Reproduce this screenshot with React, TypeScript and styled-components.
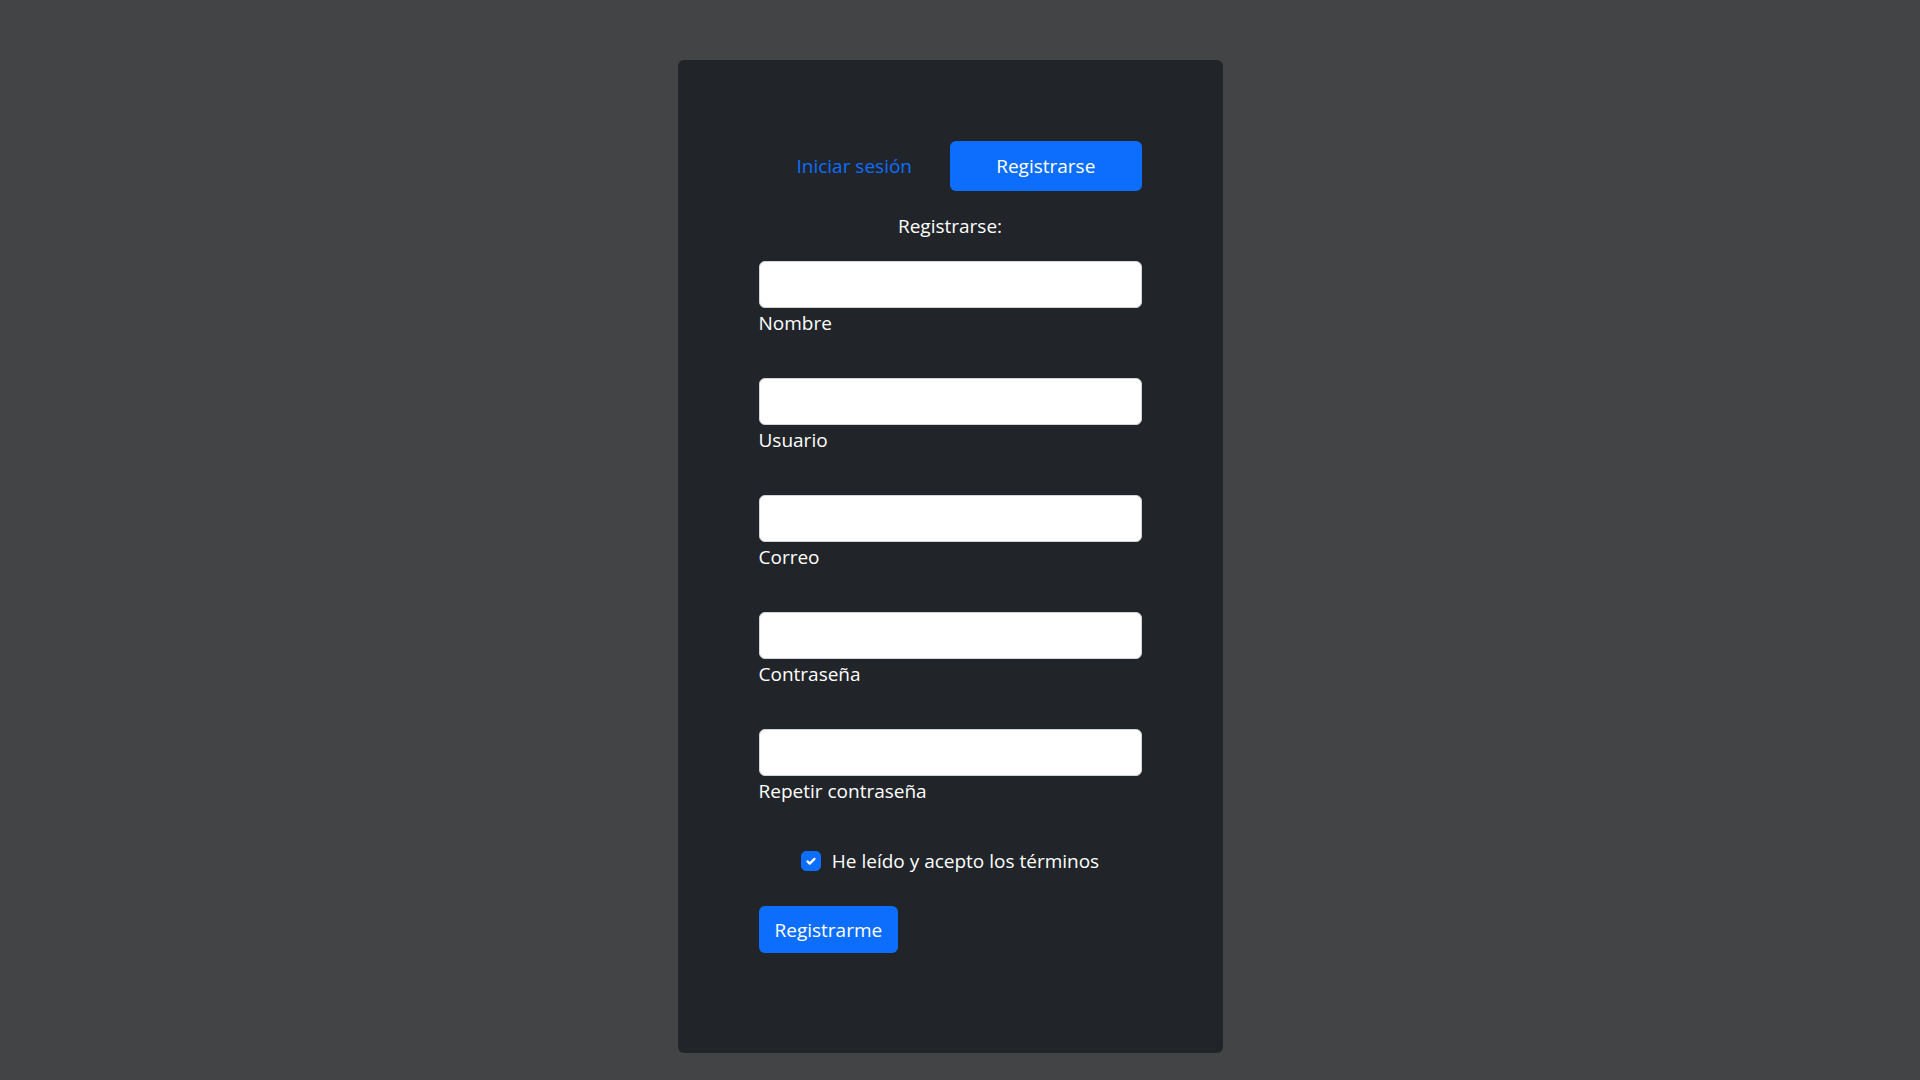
import { useState } from "react";
import styled, { createGlobalStyle } from "styled-components";

const GlobalStyle = createGlobalStyle`
  html, body {
    margin: 0;
    padding: 0;
    background: #434446;
  }
  body {
    font-family: "Segoe UI", "Open Sans", "Noto Sans", sans-serif;
  }
`;

// right padding leaves room where the browser scrollbar sits in the screenshot
const Page = styled.div`
  min-height: 100vh;
  display: flex;
  justify-content: center;
  align-items: flex-start;
  padding: 60px 20px 72px 0;
  box-sizing: border-box;
  background: #434446;
`;

const Card = styled.div`
  width: 545px;
  box-sizing: border-box;
  padding: 81px 81px 100px;
  background: #212529;
  border-radius: 6px;
  color: #fff;
  display: flex;
  flex-direction: column;
`;

const Tabs = styled.div`
  display: grid;
  grid-template-columns: 1fr 1fr;
  height: 50px;
`;

const Tab = styled.button<{ $active?: boolean }>`
  border: 0;
  border-radius: 6px;
  font-family: inherit;
  font-size: 19px;
  cursor: pointer;
  background: ${(p) => (p.$active ? "#0d6efd" : "transparent")};
  color: ${(p) => (p.$active ? "#fff" : "#0d6efd")};
`;

const Heading = styled.div`
  margin: 20px 0;
  text-align: center;
  font-size: 19px;
  line-height: 30px;
`;

const Fields = styled.div`
  display: flex;
  flex-direction: column;
  gap: 40px;
`;

const Field = styled.div`
  display: flex;
  flex-direction: column;
`;

const Input = styled.input`
  height: 47px;
  box-sizing: border-box;
  border: 1px solid #ced4da;
  border-radius: 6px;
  background: #fff;
  padding: 8px 16px;
  font-family: inherit;
  font-size: 19px;
  outline: none;
`;

const Label = styled.label`
  font-size: 19px;
  line-height: 30px;
  color: #fff;
`;

const CheckRow = styled.label`
  margin-top: 40px;
  height: 30px;
  display: flex;
  align-items: center;
  justify-content: center;
  gap: 11px;
  font-size: 19px;
  cursor: pointer;
`;

const CheckBox = styled.span<{ $checked: boolean }>`
  width: 20px;
  height: 20px;
  box-sizing: border-box;
  border-radius: 5px;
  display: flex;
  align-items: center;
  justify-content: center;
  background: ${(p) => (p.$checked ? "#0d6efd" : "#fff")};
  border: 1px solid ${(p) => (p.$checked ? "#0d6efd" : "#ced4da")};
`;

const SubmitRow = styled.div`
  margin-top: 30px;
  display: flex;
`;

const SubmitButton = styled.button`
  height: 47px;
  padding: 0 16px;
  border: 0;
  border-radius: 6px;
  background: #0d6efd;
  color: #fff;
  font-family: inherit;
  font-size: 19px;
  cursor: pointer;
`;

const fields = ["Nombre", "Usuario", "Correo", "Contraseña", "Repetir contraseña"];

const App = () => {
  const [tab, setTab] = useState<"login" | "register">("register");
  const [accepted, setAccepted] = useState(true);

  return (
    <>
      <GlobalStyle />
      <Page>
        <Card>
          <Tabs>
            <Tab $active={tab === "login"} onClick={() => setTab("login")}>
              Iniciar sesión
            </Tab>
            <Tab $active={tab === "register"} onClick={() => setTab("register")}>
              Registrarse
            </Tab>
          </Tabs>
          <Heading>Registrarse:</Heading>
          <Fields>
            {fields.map((f) => (
              <Field key={f}>
                <Input
                  id={f}
                  type={f.toLowerCase().includes("contraseña") ? "password" : "text"}
                />
                <Label htmlFor={f}>{f}</Label>
              </Field>
            ))}
          </Fields>
          <CheckRow onClick={() => setAccepted(!accepted)}>
            <CheckBox $checked={accepted}>
              {accepted && (
                <svg width="14" height="14" viewBox="0 0 20 20">
                  <path
                    d="m5 10.5 3.2 3.2L15 7"
                    fill="none"
                    stroke="#fff"
                    strokeWidth="3.2"
                    strokeLinecap="round"
                    strokeLinejoin="round"
                  />
                </svg>
              )}
            </CheckBox>
            He leído y acepto los términos
          </CheckRow>
          <SubmitRow>
            <SubmitButton>Registrarme</SubmitButton>
          </SubmitRow>
        </Card>
      </Page>
    </>
  );
};

export default App;
